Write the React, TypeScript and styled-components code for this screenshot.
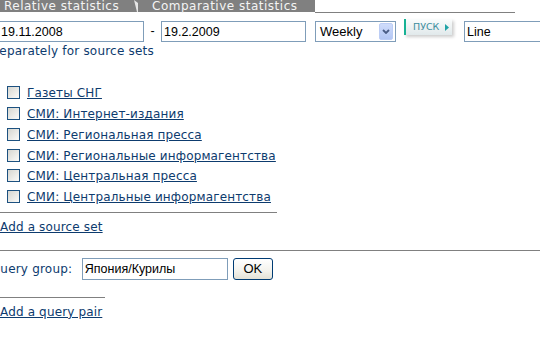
import React from "react";
import styled, { createGlobalStyle } from "styled-components";

const GlobalStyle = createGlobalStyle`
  html, body {
    margin: 0;
    padding: 0;
    background: #ffffff;
  }
  body {
    width: 540px;
    height: 360px;
    overflow: hidden;
    font-family: "DejaVu Sans", Verdana, sans-serif;
    font-size: 12px;
    color: #0d3b6e;
  }
`;

const Page = styled.div`
  width: 540px;
  height: 360px;
  overflow: hidden;
`;

const TabBar = styled.div`
  display: flex;
  height: 13px;
`;

const Tab = styled.div<{ $w: number; $pad: number }>`
  box-sizing: border-box;
  width: ${(p) => p.$w}px;
  height: 12px;
  padding-left: ${(p) => p.$pad}px;
  background: #808080;
  color: #f4f4f4;
  font-size: 12px;
  line-height: 12px;
  letter-spacing: 0.5px;
  white-space: nowrap;
`;

const Fold = styled.svg`
  display: block;
  width: 6px;
  height: 12px;
  background: #808080;
`;

const TabRule = styled.div`
  box-sizing: border-box;
  width: 200px;
  height: 13px;
  border-bottom: 1px solid #808080;
`;

const Controls = styled.div`
  display: flex;
  align-items: flex-start;
  height: 23px;
  margin-top: 6px;
`;

const Field = styled.input<{ $w: number; $ml?: number; $h?: number }>`
  box-sizing: border-box;
  flex: none;
  width: ${(p) => p.$w}px;
  height: ${(p) => p.$h ?? 21}px;
  margin: 0 0 0 ${(p) => p.$ml ?? 0}px;
  padding: 0 0 0 2px;
  border: 1px solid #7f9db9;
  border-radius: 0;
  background: #ffffff;
  color: #000000;
  font-family: "Liberation Sans", Arial, sans-serif;
  font-size: 12.5px;
  outline: none;
`;

const TopField = styled(Field)`
  margin-top: 2px;
`;

const Dash = styled.span`
  flex: none;
  width: 17px;
  margin-top: 2px;
  text-align: center;
  line-height: 21px;
  color: #000000;
  font-family: "Liberation Sans", Arial, sans-serif;
  font-size: 12.5px;
`;

const SelectBox = styled.div`
  box-sizing: border-box;
  flex: none;
  display: flex;
  align-items: center;
  width: 81px;
  height: 21px;
  margin: 2px 0 0 9px;
  padding-left: 4px;
  border: 1px solid #7f9db9;
  background: #ffffff;
  color: #000000;
  font-family: "Liberation Sans", Arial, sans-serif;
  font-size: 13px;
`;

const SelectText = styled.span`
  flex: 1;
`;

const SelectArrow = styled.span`
  box-sizing: border-box;
  display: flex;
  align-items: center;
  justify-content: center;
  width: 14px;
  height: 17px;
  margin-right: 2px;
  border: 1px solid #bccdf5;
  border-radius: 2px;
  background: linear-gradient(#cfdcfb, #b3c7f4);
`;

const GoButton = styled.button`
  box-sizing: border-box;
  flex: none;
  display: flex;
  align-items: center;
  width: 48px;
  height: 16px;
  margin-left: 8px;
  padding: 0 0 0 7px;
  border: 0;
  border-left: 2px solid #17b294;
  background: linear-gradient(#fafcfc, #e1e9eb);
  box-shadow: 2px 2px 3px rgba(0, 0, 0, 0.2);
  color: #3b8d9d;
  font-family: "DejaVu Sans", Verdana, sans-serif;
  font-size: 9.5px;
  line-height: 16px;
  cursor: pointer;
`;

const GoArrow = styled.svg`
  display: block;
  margin-left: 6px;
`;

const Note = styled.div`
  margin: 2.2px 0 0 -8.5px;
  line-height: 14px;
  letter-spacing: 0.2px;
  white-space: nowrap;
`;

const SourceList = styled.div`
  width: 277px;
  margin-top: 24.9px;
  padding-bottom: 4.7px;
  border-bottom: 1px solid #808080;
`;

const SourceRow = styled.div`
  display: flex;
  align-items: center;
  height: 20.75px;
`;

const Check = styled.input.attrs({ type: "checkbox" })`
  appearance: none;
  box-sizing: border-box;
  flex: none;
  width: 13px;
  height: 13px;
  margin: -1px 7px 0 7px;
  border: 1px solid #1c5180;
  background: linear-gradient(135deg, #d6d6d0, #fbfbf9);
`;

const Link = styled.a`
  color: #0d3b6e;
  text-decoration: underline;
  line-height: 14px;
  letter-spacing: 0.15px;
  white-space: nowrap;
`;

const Block = styled.div<{ $mt: number }>`
  margin-top: ${(p) => p.$mt}px;
  line-height: 14px;
`;

const Rule = styled.div<{ $w?: number; $mt: number }>`
  width: ${(p) => (p.$w ? `${p.$w}px` : "100%")};
  height: 0;
  margin-top: ${(p) => p.$mt}px;
  border-top: 1px solid #808080;
`;

const QueryRow = styled.div`
  display: flex;
  align-items: center;
  height: 22px;
  margin-top: 7px;
`;

const QueryLabel = styled.span`
  flex: none;
  margin-left: -9.3px;
  letter-spacing: 0.2px;
  white-space: nowrap;
`;

const OkButton = styled.button`
  box-sizing: border-box;
  flex: none;
  width: 40px;
  height: 22px;
  margin-left: 5px;
  padding: 0;
  border: 1px solid #003c74;
  border-radius: 3px;
  background: linear-gradient(#ffffff, #f3f2ec 60%, #e3e1d6);
  color: #000000;
  font-family: "Liberation Sans", Arial, sans-serif;
  font-size: 13px;
  cursor: pointer;
`;

const sources = [
  "Газеты СНГ",
  "СМИ: Интернет-издания",
  "СМИ: Региональная пресса",
  "СМИ: Региональные информагентства",
  "СМИ: Центральная пресса",
  "СМИ: Центральные информагентства",
];

export default function App() {
  return (
    <Page>
      <GlobalStyle />
      <TabBar>
        <Tab $w={133} $pad={4}>Relative statistics</Tab>
        <Fold viewBox="0 0 6 12">
          <polygon points="1,0 5,3 5,12 4,12" fill="#e6e6e6" />
        </Fold>
        <Tab $w={176} $pad={13}>Comparative statistics</Tab>
        <TabRule />
      </TabBar>

      <Controls>
        <TopField $w={146} $ml={-2} defaultValue="19.11.2008" />
        <Dash>-</Dash>
        <TopField $w={145} defaultValue="19.2.2009" />
        <SelectBox>
          <SelectText>Weekly</SelectText>
          <SelectArrow>
            <svg width="8" height="5" viewBox="0 0 8 5">
              <polyline
                points="1,1 4,4 7,1"
                fill="none"
                stroke="#4a5d86"
                strokeWidth="1.8"
              />
            </svg>
          </SelectArrow>
        </SelectBox>
        <GoButton>
          ПУСК
          <GoArrow width="4" height="7" viewBox="0 0 4 7">
            <polygon points="0,0 4,3.5 0,7" fill="#1fa3a6" />
          </GoArrow>
        </GoButton>
        <TopField $w={120} $ml={12} defaultValue="Line" />
      </Controls>

      <Note>Separately for source sets</Note>

      <SourceList>
        {sources.map((s) => (
          <SourceRow key={s}>
            <Check />
            <Link href="#">{s}</Link>
          </SourceRow>
        ))}
      </SourceList>

      <Block $mt={6.9}>
        <Link href="#">Add a source set</Link>
      </Block>

      <Rule $mt={15.8} />

      <QueryRow>
        <QueryLabel>Query group:</QueryLabel>
        <Field $w={146} $ml={9.5} $h={22} defaultValue="Япония/Курилы" />
        <OkButton>OK</OkButton>
      </QueryRow>

      <Rule $w={105} $mt={17.5} />

      <Block $mt={6.2}>
        <Link href="#">Add a query pair</Link>
      </Block>
    </Page>
  );
}
